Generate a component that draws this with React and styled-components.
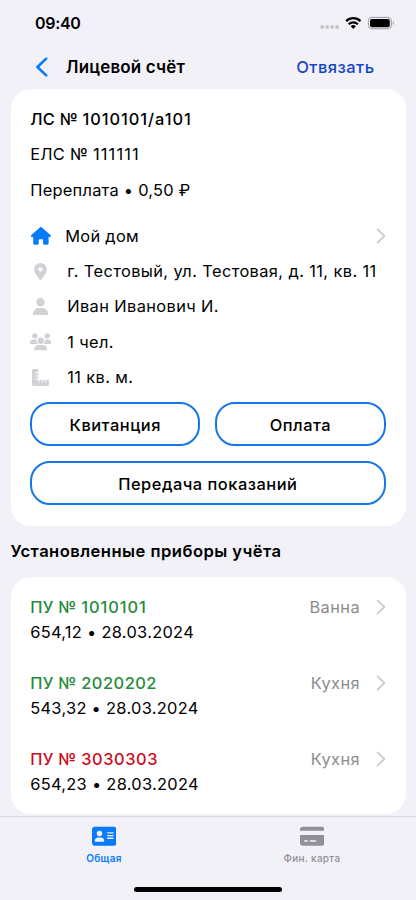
import styled, { createGlobalStyle } from 'styled-components';
import {
  FaHouse,
  FaLocationDot,
  FaUser,
  FaUsers,
  FaRulerCombined,
  FaAddressCard,
  FaCreditCard,
} from 'react-icons/fa6';

const meters = [
  { number: '1010101', value: '654,12', date: '28.03.2024', room: 'Ванна', color: '#278a3c', spacing: 0.95 },
  { number: '2020202', value: '543,32', date: '28.03.2024', room: 'Кухня', color: '#278a3c', spacing: 0.5 },
  { number: '3030303', value: '654,23', date: '28.03.2024', room: 'Кухня', color: '#cb0c1c', spacing: 0.55 },
];

function Chevron() {
  return (
    <svg width="10" height="16" viewBox="0 0 10 16" fill="none">
      <path d="M1.6 1.4 8.4 8l-6.8 6.6" stroke="#cdcdd2" strokeWidth="1.9" strokeLinecap="round" strokeLinejoin="round" />
    </svg>
  );
}

function StatusIcons() {
  return (
    <svg width="76" height="14" viewBox="0 0 76 14">
      <g fill="#c3c3c8">
        <circle cx="2.2" cy="11" r="1.9" />
        <circle cx="7.2" cy="11" r="1.9" />
        <circle cx="12.1" cy="11" r="1.9" />
        <circle cx="17" cy="11" r="1.9" />
      </g>
      <g fill="none" stroke="#000" strokeWidth="2.2">
        <path d="M26.1 5.1a10.4 10.4 0 0 1 14.4 0" />
        <path d="M28.7 8.2a6.6 6.6 0 0 1 9.2 0" />
      </g>
      <path d="M33.3 12.9 30.7 10.2a3.8 3.8 0 0 1 5.2 0z" />
      <rect x="48.4" y="1.4" width="23" height="11.4" rx="3.5" fill="none" stroke="#9a9a9f" />
      <rect x="50" y="3" width="19.8" height="8.2" rx="2" />
      <path d="M72.8 5.3c1.4.5 1.4 3.1 0 3.6z" fill="#9a9a9f" />
    </svg>
  );
}

function App() {
  return (
    <Screen>
      <GlobalStyle />
      <StatusBar>
        <Time>09:40</Time>
        <StatusIcons />
      </StatusBar>
      <NavBar>
        <svg width="12" height="20" viewBox="0 0 12 20" fill="none">
          <path d="M10.2 1.6 1.4 10l8.8 8.4" stroke="#087bfa" strokeWidth="2.6" strokeLinecap="round" strokeLinejoin="round" />
        </svg>
        <Title>Лицевой счёт</Title>
        <Unlink>Отвязать</Unlink>
      </NavBar>

      <Content>
        <AccountCard>
          <Line $weight={500}>ЛС № <Digits $spacing={0.95}>1010101/a101</Digits></Line>
          <Line>ЕЛС № <Digits $spacing={1.15}>111111</Digits></Line>
          <Line>Переплата • 0,50 ₽</Line>
          <Details>
            <Detail $home>
              <IconBox $active><FaHouse size={19.8} /></IconBox>
              <span>Мой дом</span>
              <Chevron />
            </Detail>
            <Detail>
              <IconBox><FaLocationDot size={17} /></IconBox>
              <span>г. Тестовый, ул. Тестовая, д. 11, кв. 11</span>
            </Detail>
            <Detail>
              <IconBox><FaUser size={17} /></IconBox>
              <span>Иван Иванович И.</span>
            </Detail>
            <Detail>
              <IconBox><FaUsers size={21.5} /></IconBox>
              <span>1 чел.</span>
            </Detail>
            <Detail>
              <IconBox><FaRulerCombined size={17} /></IconBox>
              <span>11 кв. м.</span>
            </Detail>
          </Details>
          <Buttons>
            <Button>Квитанция</Button>
            <Button>Оплата</Button>
            <Button $wide>Передача показаний</Button>
          </Buttons>
        </AccountCard>

        <SectionTitle>Установленные приборы учёта</SectionTitle>

        <MeterCard>
          {meters.map((m) => (
            <Meter key={m.number}>
              <MeterTop>
                <MeterName $color={m.color}>
                  ПУ № <Digits $spacing={m.spacing}>{m.number}</Digits>
                </MeterName>
                <Room>{m.room}</Room>
                <Chevron />
              </MeterTop>
              <Reading>{m.value} • {m.date}</Reading>
            </Meter>
          ))}
        </MeterCard>
      </Content>

      <TabBar>
        <Tab $active>
          <FaAddressCard size={24.5} />
          <TabLabel $active>Общая</TabLabel>
        </Tab>
        <Tab>
          <FaCreditCard size={24.5} />
          <TabLabel>Фин. карта</TabLabel>
        </Tab>
        <HomeIndicator />
      </TabBar>
    </Screen>
  );
}

const GlobalStyle = createGlobalStyle`
  * {
    box-sizing: border-box;
  }
  body {
    margin: 0;
    background: #f2f1f8;
    font-family: Inter, sans-serif;
    color: #000;
  }
  svg {
    display: block;
    flex: none;
  }
`;

const Screen = styled.div`
  display: flex;
  flex-direction: column;
  width: 416px;
  height: 900px;
  overflow: hidden;
  background: #f2f1f8;
  font-size: 16.4px;
  letter-spacing: 0.3px;
  white-space: nowrap;
`;

const StatusBar = styled.div`
  display: flex;
  align-items: center;
  justify-content: space-between;
  height: 46px;
  padding: 0 20px 0 35px;
`;

const Time = styled.span`
  font-size: 16px;
  font-weight: 600;
  letter-spacing: -0.3px;
`;

const NavBar = styled.div`
  display: flex;
  align-items: center;
  height: 43px;
  padding: 0 41.5px 2px 35.8px;
`;

const Title = styled.h1`
  flex: 1;
  margin: 0 0 0 18px;
  font-size: 17px;
  font-weight: 600;
  letter-spacing: 0.15px;
`;

const Unlink = styled.span`
  font-size: 16.5px;
  font-weight: 500;
  letter-spacing: 0.45px;
  color: #1546c8;
`;

const Content = styled.main`
  flex: 1;
  padding: 0 10.5px;
`;

const AccountCard = styled.section`
  height: 437px;
  padding: 12.5px 20px 20px 19.7px;
  border-radius: 20px;
  background: #fff;
`;

const Line = styled.div`
  height: 35.5px;
  line-height: 35px;
  font-weight: ${(p) => p.$weight || 400};
  letter-spacing: 0.26px;
`;

const Digits = styled.span`
  letter-spacing: ${(p) => p.$spacing}px;
`;

const Details = styled.div`
  padding-top: 10px;
`;

const Detail = styled.div`
  display: flex;
  align-items: center;
  height: 35.4px;
  gap: ${(p) => (p.$home ? '14px' : '16px')};
  letter-spacing: ${(p) => (p.$home ? '0.3px' : '0.39px')};

  span {
    flex: 1;
  }
`;

const IconBox = styled.div`
  display: flex;
  justify-content: center;
  width: 21px;
  color: ${(p) => (p.$active ? '#087bfa' : '#d2d1d6')};
`;

const Buttons = styled.div`
  display: grid;
  grid-template-columns: 1fr 1fr;
  gap: 15px;
  margin-top: 7.5px;
`;

const Button = styled.button`
  grid-column: ${(p) => (p.$wide ? 'span 2' : 'auto')};
  height: 44px;
  padding: 1px 0 0;
  border: 2px solid #1677e8;
  border-radius: 20px;
  background: #fff;
  color: #000;
  font: 500 16.4px Inter, sans-serif;
  letter-spacing: 0.52px;
`;

const SectionTitle = styled.h2`
  margin: 0;
  height: 51px;
  line-height: 51px;
  font-size: 16.6px;
  font-weight: 600;
  letter-spacing: 0.46px;
`;

const MeterCard = styled.section`
  height: 237px;
  padding: 17px 20px 0 19.7px;
  border-radius: 20px;
  background: #fff;
`;

const Meter = styled.div`
  height: 76px;
`;

const MeterTop = styled.div`
  display: flex;
  align-items: center;
  height: 26px;
`;

const MeterName = styled.span`
  flex: 1;
  font-weight: 500;
  color: ${(p) => p.$color};
`;

const Room = styled.span`
  margin-right: 15.5px;
  letter-spacing: 0.4px;
  color: #8b8b8e;
`;

const Reading = styled.div`
  height: 25px;
  line-height: 25px;
`;

const TabBar = styled.nav`
  position: relative;
  display: flex;
  height: 84px;
  border-top: 1px solid #d9d8df;
  background: #f2f1f8;
`;

const Tab = styled.div`
  display: flex;
  flex: 1;
  flex-direction: column;
  align-items: center;
  padding-top: 6.5px;
  color: ${(p) => (p.$active ? '#087bfa' : '#918f97')};
`;

const TabLabel = styled.span`
  margin-top: 2.5px;
  font-size: 10px;
  line-height: 14px;
  font-weight: ${(p) => (p.$active ? 600 : 500)};
`;

const HomeIndicator = styled.div`
  position: absolute;
  bottom: 8px;
  left: 134px;
  width: 148px;
  height: 5px;
  border-radius: 3px;
  background: #000;
`;

export default App;
